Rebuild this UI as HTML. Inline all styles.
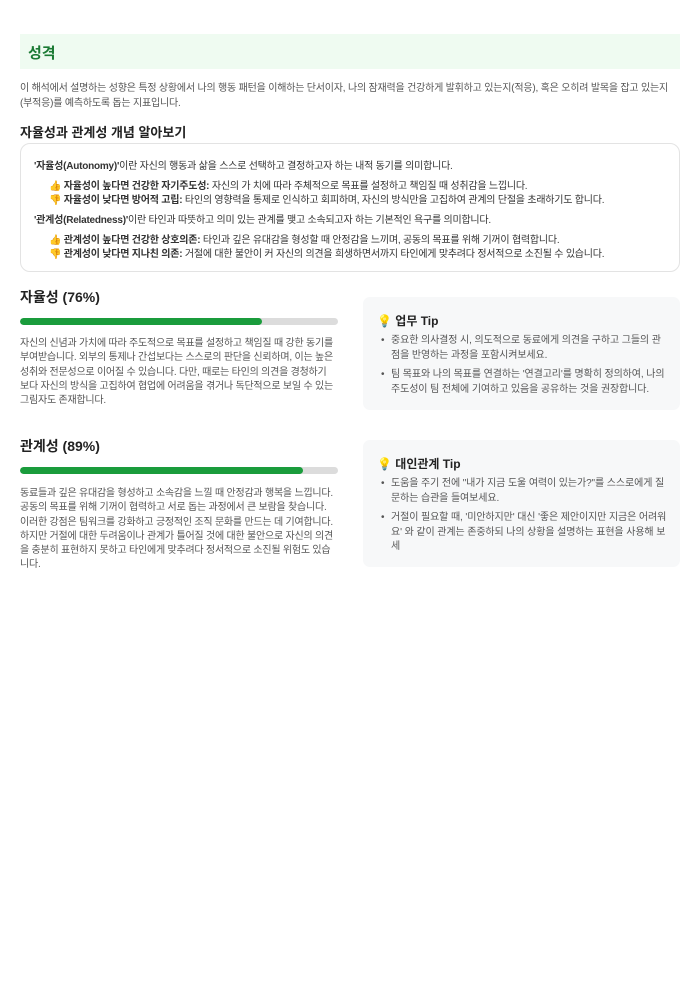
<!DOCTYPE html>
<html><head><meta charset="utf-8"><style>
*{margin:0;padding:0;box-sizing:border-box}
body{width:700px;height:990px;background:#fff;font-family:"Liberation Sans","Noto Sans CJK KR",sans-serif;color:#333;position:relative}
.a{position:absolute}
.hdr{left:20px;top:34px;width:660px;height:35px;background:#effbf1}
.hdr span{position:absolute;left:8px;top:8px;font-size:15px;font-weight:bold;color:#1b7a34}
.intro{left:20px;top:82px;width:662px;font-size:10px;line-height:14.5px;color:#555;letter-spacing:-0.2px}
h2{font-size:13px;font-weight:bold;color:#222}
.box{left:20px;top:143px;width:660px;height:129px;border:1px solid #e3e3e3;border-radius:10px;font-size:10px;color:#333;letter-spacing:-0.22px}
.box p{position:absolute;left:13px;white-space:nowrap}
.box p.i{left:28px}
.bar{width:318px;height:7px;background:#dcdcdc;border-radius:4px;overflow:hidden}
.bar div{height:7px;background:#1a9c3c;border-radius:4px}
.para{width:330px;font-size:10px;line-height:14.3px;color:#555;letter-spacing:-0.22px;white-space:nowrap}
.tip{left:363px;width:317px;background:#f7f8f9;border-radius:7px}
.tip h3{position:absolute;left:14px;font-size:12px;font-weight:bold;color:#222}
.tip ul{position:absolute;left:20px;width:292px;font-size:10px;line-height:14.5px;color:#555;list-style:none;letter-spacing:-0.1px;white-space:nowrap}
.tip li{position:relative;padding-left:8px;margin-bottom:5px}
.tip li:before{content:"•";position:absolute;left:-2px;top:0}
</style></head><body>
<div class="a hdr"><span>성격</span></div>
<div class="a intro">이 해석에서 설명하는 성향은 특정 상황에서 나의 행동 패턴을 이해하는 단서이자, 나의 잠재력을 건강하게 발휘하고 있는지(적응), 혹은 오히려 발목을 잡고 있는지<br>(부적응)를 예측하도록 돕는 지표입니다.</div>
<h2 class="a" style="left:20px;top:122px">자율성과 관계성 개념 알아보기</h2>
<div class="a box">
<p style="top:13px"><b>'자율성(Autonomy)'</b>이란 자신의 행동과 삶을 스스로 선택하고 결정하고자 하는 내적 동기를 의미합니다.</p>
<p class="i" style="top:33px">👍 <b>자율성이 높다면 건강한 자기주도성:</b> 자신의 가 치에 따라 주체적으로 목표를 설정하고 책임질 때 성취감을 느낍니다.</p>
<p class="i" style="top:47px">👎 <b>자율성이 낮다면 방어적 고립:</b> 타인의 영향력을 통제로 인식하고 회피하며, 자신의 방식만을 고집하여 관계의 단절을 초래하기도 합니다.</p>
<p style="top:67px"><b>'관계성(Relatedness)'</b>이란 타인과 따뜻하고 의미 있는 관계를 맺고 소속되고자 하는 기본적인 욕구를 의미합니다.</p>
<p class="i" style="top:87px">👍 <b>관계성이 높다면 건강한 상호의존:</b> 타인과 깊은 유대감을 형성할 때 안정감을 느끼며, 공동의 목표를 위해 기꺼이 협력합니다.</p>
<p class="i" style="top:101px">👎 <b>관계성이 낮다면 지나친 의존:</b> 거절에 대한 불안이 커 자신의 의견을 희생하면서까지 타인에게 맞추려다 정서적으로 소진될 수 있습니다.</p>
</div>

<h2 class="a" style="left:20px;top:287px;font-size:14px">자율성 (76%)</h2>
<div class="a bar" style="left:20px;top:318px"><div style="width:76%"></div></div>
<div class="a para" style="left:20px;top:337px">자신의 신념과 가치에 따라 주도적으로 목표를 설정하고 책임질 때 강한 동기를<br>부여받습니다. 외부의 통제나 간섭보다는 스스로의 판단을 신뢰하며, 이는 높은<br>성취와 전문성으로 이어질 수 있습니다. 다만, 때로는 타인의 의견을 경청하기<br>보다 자신의 방식을 고집하여 협업에 어려움을 겪거나 독단적으로 보일 수 있는<br>그림자도 존재합니다.</div>
<div class="a tip" style="top:297px;height:113px">
<h3 style="top:15px">💡 업무 Tip</h3>
<ul style="top:37px"><li>중요한 의사결정 시, 의도적으로 동료에게 의견을 구하고 그들의 관<br>점을 반영하는 과정을 포함시켜보세요.</li><li>팀 목표와 나의 목표를 연결하는 '연결고리'를 명확히 정의하여, 나의<br>주도성이 팀 전체에 기여하고 있음을 공유하는 것을 권장합니다.</li></ul>
</div>

<h2 class="a" style="left:20px;top:436px;font-size:14px">관계성 (89%)</h2>
<div class="a bar" style="left:20px;top:467px"><div style="width:89%"></div></div>
<div class="a para" style="left:20px;top:487px">동료들과 깊은 유대감을 형성하고 소속감을 느낄 때 안정감과 행복을 느낍니다.<br>공동의 목표를 위해 기꺼이 협력하고 서로 돕는 과정에서 큰 보람을 찾습니다.<br>이러한 강점은 팀워크를 강화하고 긍정적인 조직 문화를 만드는 데 기여합니다.<br>하지만 거절에 대한 두려움이나 관계가 틀어질 것에 대한 불안으로 자신의 의견<br>을 충분히 표현하지 못하고 타인에게 맞추려다 정서적으로 소진될 위험도 있습<br>니다.</div>
<div class="a tip" style="top:440px;height:127px">
<h3 style="top:15px">💡 대인관계 Tip</h3>
<ul style="top:37px"><li>도움을 주기 전에 "내가 지금 도울 여력이 있는가?"를 스스로에게 질<br>문하는 습관을 들여보세요.</li><li>거절이 필요할 때, '미안하지만' 대신 '좋은 제안이지만 지금은 어려워<br>요' 와 같이 관계는 존중하되 나의 상황을 설명하는 표현을 사용해 보<br>세</li></ul>
</div>
</body></html>
